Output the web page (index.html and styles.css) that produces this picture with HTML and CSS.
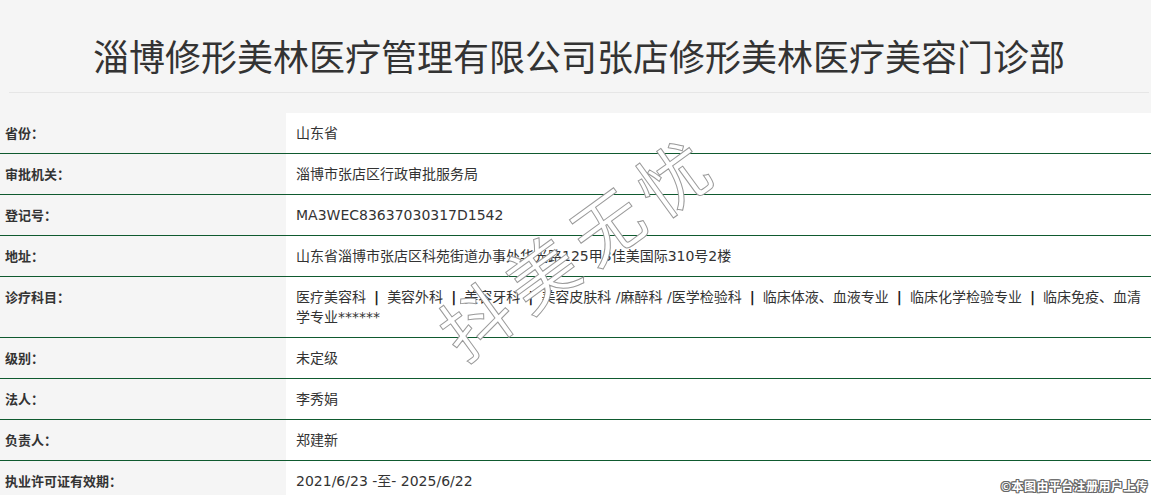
FILE: index.html
```html
<!DOCTYPE html>
<html lang="zh-CN">
<head>
<meta charset="utf-8">
<title>淄博修形美林医疗管理有限公司张店修形美林医疗美容门诊部</title>
<link rel="stylesheet" href="styles.css">
</head>
<body>
<header class="head">
  <h1 class="title">淄博修形美林医疗管理有限公司张店修形美林医疗美容门诊部</h1>
  <div class="rule"></div>
</header>
<main class="info">
  <div class="row"><div class="label">省份：</div><div class="value">山东省</div></div>
  <div class="row"><div class="label">审批机关：</div><div class="value">淄博市张店区行政审批服务局</div></div>
  <div class="row"><div class="label">登记号：</div><div class="value">MA3WEC83637030317D1542</div></div>
  <div class="row"><div class="label">地址：</div><div class="value">山东省淄博市张店区科苑街道办事处华光路125甲3佳美国际310号2楼</div></div>
  <div class="row"><div class="label">诊疗科目：</div><div class="value">医疗美容科<span class="sep">|</span>美容外科<span class="sep">|</span>美容牙科<span class="sep">|</span>美容皮肤科 /麻醉科 /医学检验科<span class="sep">|</span>临床体液、血液专业<span class="sep">|</span>临床化学检验专业<span class="sep">|</span>临床免疫、血清学专业******</div></div>
  <div class="row"><div class="label">级别：</div><div class="value">未定级</div></div>
  <div class="row"><div class="label">法人：</div><div class="value">李秀娟</div></div>
  <div class="row"><div class="label">负责人：</div><div class="value">郑建新</div></div>
  <div class="row"><div class="label">执业许可证有效期：</div><div class="value">2021/6/23 -至- 2025/6/22</div></div>
</main>
<div class="watermark">抖美无忧</div>
<div class="copyright">©本图由平台注册用户上传</div>
</body>
</html>
```
FILE: styles.css
```css
html, body {
  margin: 0;
  padding: 0;
  background: #f5f5f5;
  color: #333;
  font-family: "Noto Sans CJK SC", "Noto Sans", sans-serif;
  overflow: hidden;
}

.head {
  padding-top: 29px;
}

.title {
  margin: 0;
  padding-left: 7px;
  font-size: 36px;
  line-height: 52px;
  font-weight: normal;
  text-align: center;
  color: #333;
}

.rule {
  margin: 11px 2px 20px 9px;
  height: 1px;
  background: #e6e6e6;
}

.info {
  display: flex;
  flex-direction: column;
}

.row {
  display: grid;
  grid-template-columns: 286px 1fr;
  border-bottom: 1px solid #0f5a2f;
}

.label {
  padding: 10px 5px;
  font-size: 13px;
  line-height: 20px;
  font-weight: bold;
  color: #333;
}

.value {
  background: #fff;
  padding: 10px 5px 10px 10px;
  font-family: "DejaVu Sans", "Noto Sans CJK SC", sans-serif;
  font-size: 14px;
  line-height: 20px;
  color: #333;
}

.sep {
  font-weight: bold;
  margin: 0 8px;
  color: #222;
}

.watermark {
  position: absolute;
  left: 415px;
  top: 209px;
  font-size: 70px;
  letter-spacing: 11px;
  line-height: 70px;
  color: #fff;
  -webkit-text-stroke: 1px #9a9a9a;
  transform: rotate(-36deg);
  white-space: nowrap;
  pointer-events: none;
}

.copyright {
  position: absolute;
  right: 3px;
  bottom: 1px;
  font-size: 12px;
  letter-spacing: 0.4px;
  font-weight: bold;
  line-height: 16px;
  color: #fff;
  text-shadow: 1px 0 #666, -1px 0 #666, 0 1px #666, 0 -1px #666, 1px 1px #666, -1px -1px #666, 1px -1px #666, -1px 1px #666;
}
```
